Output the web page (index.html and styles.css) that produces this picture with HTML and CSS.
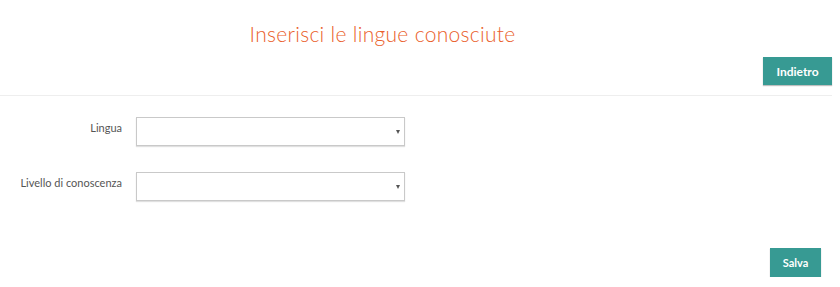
FILE: index.html
```html
<!DOCTYPE html>
<html lang="it">
<head>
<meta charset="utf-8">
<title>Lingue</title>
<link rel="stylesheet" href="styles.css">
</head>
<body>
<div class="page">
  <header class="head">
    <h1 class="title">Inserisci le lingue conosciute</h1>
    <div class="toolbar">
      <button class="btn btn-back" type="button">Indietro</button>
    </div>
  </header>
  <form class="form">
    <div class="row">
      <label class="label" for="lingua">Lingua</label>
      <div class="select">
        <select id="lingua"><option></option></select>
        <span class="caret"></span>
      </div>
    </div>
    <div class="row">
      <label class="label" for="livello">Livello di conoscenza</label>
      <div class="select">
        <select id="livello"><option></option></select>
        <span class="caret"></span>
      </div>
    </div>
    <div class="actions">
      <button class="btn btn-save" type="button">Salva</button>
    </div>
  </form>
</div>
</body>
</html>
```
FILE: styles.css
```css
* { box-sizing: border-box; }
html, body { margin: 0; padding: 0; background: #fff; }
body { font-family: "Lato", "Open Sans", sans-serif; color: #555; }
.page { width: 832px; }
.head { border-bottom: 1px solid #eeeeee; padding-bottom: 10px; }
.title {
  margin: 0;
  padding-top: 20px;
  width: 765px;
  text-align: center;
  font-weight: 300;
  font-size: 21px;
  line-height: 28px;
  color: #ea5f2c;
  letter-spacing: 0.3px;
}
.toolbar { display: flex; justify-content: flex-end; margin-top: 9px; }
.btn {
  border: 0;
  background: #379a93;
  color: #fff;
  font-family: "Lato", sans-serif;
  font-weight: 700;
  font-size: 12px;
  padding: 0;
  cursor: pointer;
  box-shadow: 0 1px 1px rgba(0,0,0,0.25);
}
.btn-back { width: 69px; height: 28px; }
.form { padding-top: 21px; }
.row { display: flex; align-items: flex-start; margin-bottom: 26px; }
.label {
  width: 122px;
  text-align: right;
  font-size: 11px;
  line-height: 14px;
  padding-top: 4px;
  color: #555;
  margin-right: 14px;
}
.select { position: relative; width: 269px; height: 29px; }
.select select {
  appearance: none;
  -webkit-appearance: none;
  width: 100%;
  height: 100%;
  border: 1px solid #c9c9c9;
  border-radius: 0;
  background: #fff;
  box-shadow: 0 1px 1px rgba(0,0,0,0.12);
  outline: none;
}
.caret {
  position: absolute;
  right: 5px;
  top: 13px;
  width: 0; height: 0;
  border-left: 2.5px solid transparent;
  border-right: 2.5px solid transparent;
  border-top: 4px solid #555;
}
.actions { display: flex; justify-content: flex-end; padding-right: 11px; margin-top: 47px; }
.btn-save { width: 51px; height: 29px; font-size: 11px; }
```
